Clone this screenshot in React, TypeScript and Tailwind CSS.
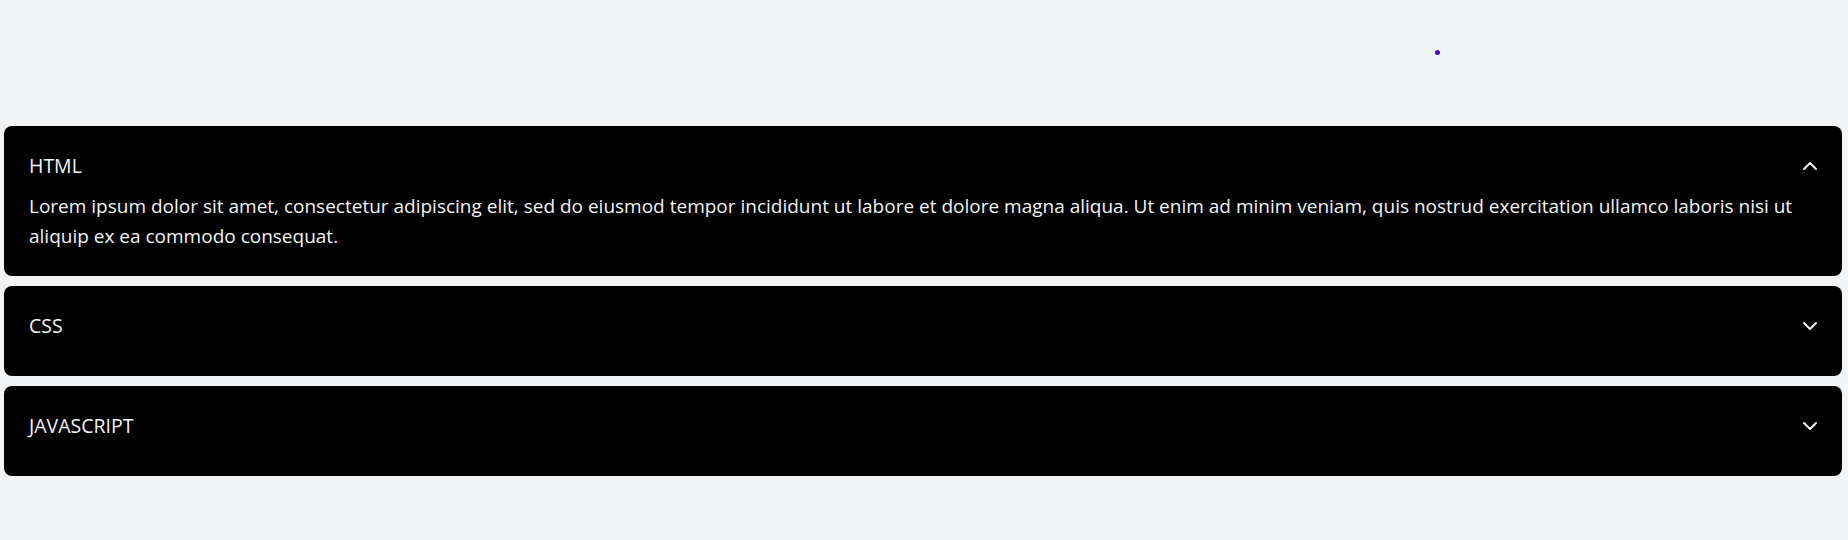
import { useState } from "react";
import { ChevronDown, ChevronUp } from "lucide-react";

const items = [
  {
    title: "HTML",
    body: "Lorem ipsum dolor sit amet, consectetur adipiscing elit, sed do eiusmod tempor incididunt ut labore et dolore magna aliqua. Ut enim ad minim veniam, quis nostrud exercitation ullamco laboris nisi ut aliquip ex ea commodo consequat.",
  },
  {
    title: "CSS",
    body: "Lorem ipsum dolor sit amet, consectetur adipiscing elit, sed do eiusmod tempor incididunt ut labore et dolore magna aliqua.",
  },
  {
    title: "JAVASCRIPT",
    body: "Lorem ipsum dolor sit amet, consectetur adipiscing elit, sed do eiusmod tempor incididunt ut labore et dolore magna aliqua.",
  },
];

function AccordionItem({
  title,
  body,
  open,
  onToggle,
}: {
  title: string;
  body: string;
  open: boolean;
  onToggle: () => void;
}) {
  return (
    <div className="rounded-lg bg-black pb-[25px] pl-[25px] pr-5 pt-6 text-gray-100">
      <button
        onClick={onToggle}
        className="flex h-8 w-full cursor-pointer items-center justify-between text-left text-[19.5px]"
      >
        <span>{title}</span>
        {open ? <ChevronUp className="size-6" /> : <ChevronDown className="size-6" />}
      </button>
      <div className="mt-[9px]">
        {open && <p className="pr-1 text-[19px] leading-[30px]">{body}</p>}
      </div>
    </div>
  );
}

export default function App() {
  const [open, setOpen] = useState(0);

  return (
    <div
      className="relative min-h-screen bg-gray-100 pt-[126px]"
      style={{ fontFamily: '"Open Sans", "Noto Sans", sans-serif' }}
    >
      {/* small cursor dot */}
      <span className="absolute left-[1435px] top-[50px] size-[5px] rounded-full bg-[#4108d4]" />

      <div className="ml-1 mr-1.5 flex flex-col gap-2.5">
        {items.map((item, i) => (
          <AccordionItem
            key={item.title}
            title={item.title}
            body={item.body}
            open={open === i}
            onToggle={() => setOpen(open === i ? -1 : i)}
          />
        ))}
      </div>
    </div>
  );
}
